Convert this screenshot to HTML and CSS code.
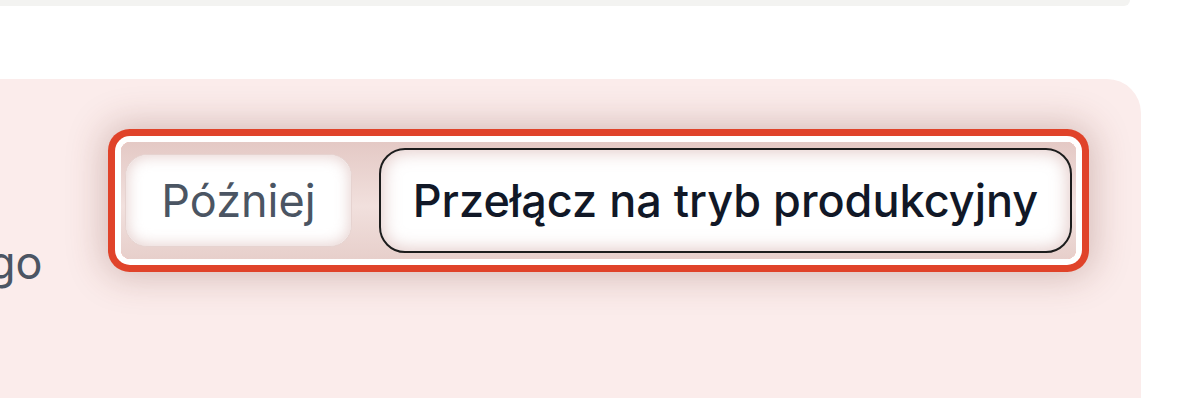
FILE: index.html
```html
<!DOCTYPE html>
<html lang="pl">
<head>
<meta charset="utf-8">
<title>Tryb</title>
<link rel="stylesheet" href="styles.css">
</head>
<body>
  <div class="top-card"></div>
  <section class="alert">
    <p class="alert-text">go</p>
    <div class="actions">
      <button class="btn btn-later">Później</button>
      <button class="btn btn-primary">Przełącz na tryb produkcyjny</button>
    </div>
  </section>
</body>
</html>
```

FILE: styles.css
```css
html, body {
  margin: 0;
  padding: 0;
  background: #ffffff;
  width: 1200px;
  height: 398px;
  overflow: hidden;
  font-family: Inter, "Noto Sans", sans-serif;
}

.top-card {
  width: 1150px;
  height: 6px;
  margin-left: -20px;
  background: #f3f3f1;
  border-bottom-right-radius: 22px;
}

.alert {
  margin-top: 73px;
  width: 1141px;
  height: 319px;
  background: #fbeceb;
  border-top-right-radius: 34px;
  display: flex;
  align-items: flex-start;
}

.alert-text {
  margin: 0;
  margin-left: -12px;
  width: 95px;
  padding-top: 156px;
  font-size: 45px;
  line-height: 56px;
  color: #4b5563;
}

.actions {
  margin-top: 63px;
  margin-left: 38px;
  width: 955px;
  height: 117px;
  box-sizing: border-box;
  padding: 0 4px;
  display: flex;
  align-items: center;
  justify-content: space-between;
  border-radius: 9px;
  background: linear-gradient(180deg, #e4c9c5 0%, #f1e0dd 55%, #e7cfcb 100%);
  box-shadow:
    0 0 0 6px #ffffff,
    0 0 0 13px #e0432a,
    0 0 36px 18px rgba(110, 50, 40, 0.26);
}

.btn {
  font-family: Inter, "Noto Sans", sans-serif;
  font-size: 45px;
  box-sizing: border-box;
  background: #ffffff;
  cursor: pointer;
  white-space: nowrap;
}

.btn-later {
  height: 93px;
  width: 227px;
  padding: 0;
  color: #4b5563;
  border: 1px solid #e6d3d0;
  border-radius: 22px;
  box-shadow: inset 0 0 14px 2px rgba(205, 160, 155, 0.45);
}

.btn-primary {
  height: 105px;
  width: 693px;
  padding: 0;
  color: #111827;
  font-weight: 500;
  border: 2px solid #1c1c1c;
  border-radius: 26px;
  box-shadow: inset 0 0 16px 3px rgba(205, 160, 155, 0.5);
}
```
